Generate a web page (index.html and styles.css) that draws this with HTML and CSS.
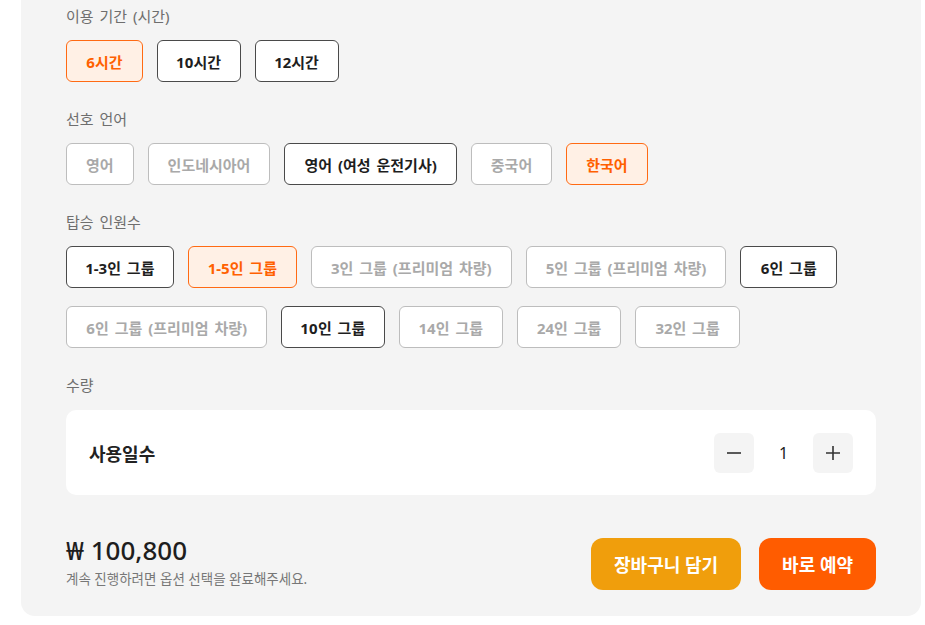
FILE: index.html
```html
<!DOCTYPE html>
<html lang="ko">
<head>
<meta charset="utf-8">
<link rel="stylesheet" href="styles.css">
</head>
<body>
<div class="panel">
  <section class="group">
    <div class="label">이용 기간 (시간)</div>
    <div class="options">
      <button class="opt selected">6시간</button>
      <button class="opt">10시간</button>
      <button class="opt">12시간</button>
    </div>
  </section>
  <section class="group">
    <div class="label">선호 언어</div>
    <div class="options">
      <button class="opt disabled">영어</button>
      <button class="opt disabled">인도네시아어</button>
      <button class="opt">영어 (여성 운전기사)</button>
      <button class="opt disabled">중국어</button>
      <button class="opt selected">한국어</button>
    </div>
  </section>
  <section class="group">
    <div class="label">탑승 인원수</div>
    <div class="options">
      <button class="opt">1-3인 그룹</button>
      <button class="opt selected">1-5인 그룹</button>
      <button class="opt disabled">3인 그룹 (프리미엄 차량)</button>
      <button class="opt disabled">5인 그룹 (프리미엄 차량)</button>
      <button class="opt">6인 그룹</button>
      <button class="opt disabled">6인 그룹 (프리미엄 차량)</button>
      <button class="opt">10인 그룹</button>
      <button class="opt disabled">14인 그룹</button>
      <button class="opt disabled">24인 그룹</button>
      <button class="opt disabled">32인 그룹</button>
    </div>
  </section>
  <section class="group qty-group">
    <div class="label">수량</div>
    <div class="qty-card">
      <div class="qty-name">사용일수</div>
      <div class="stepper">
        <button class="step" aria-label="minus">
          <svg width="16" height="16" viewBox="0 0 16 16"><path d="M1 8H15" stroke="#333" stroke-width="1.6" fill="none"/></svg>
        </button>
        <span class="count">1</span>
        <button class="step" aria-label="plus">
          <svg width="16" height="16" viewBox="0 0 16 16"><path d="M1 8H15M8 1V15" stroke="#333" stroke-width="1.6" fill="none"/></svg>
        </button>
      </div>
    </div>
  </section>
  <div class="footer">
    <div class="price-block">
      <div class="price">₩ 100,800</div>
      <div class="hint">계속 진행하려면 옵션 선택을 완료해주세요.</div>
    </div>
    <div class="actions">
      <button class="cta cart">장바구니 담기</button>
      <button class="cta book">바로 예약</button>
    </div>
  </div>
</div>
</body>
</html>
```
FILE: styles.css
```css
* { box-sizing: border-box; }
html, body { margin: 0; padding: 0; background: #ffffff; }
body {
  font-family: "Noto Sans", "Noto Sans CJK KR", sans-serif;
  color: #222;
}
.panel {
  margin-left: 21px;
  width: 900px;
  background: #f4f4f4;
  border-radius: 0 0 14px 14px;
  padding: 6px 45px 23px;
  display: flex;
  flex-direction: column;
  gap: 27px;
}
.group { display: flex; flex-direction: column; gap: 14px; }
.qty-group { gap: 15px; }
.label {
  font-size: 15px;
  line-height: 20px;
  color: #6e6e6e;
  word-spacing: 2px;
}
.options {
  display: flex;
  flex-wrap: wrap;
  column-gap: 14px;
  row-gap: 18px;
}
.opt {
  font-family: inherit;
  height: 42px;
  padding: 0 19px;
  border: 1px solid #4a4a4a;
  border-radius: 6px;
  background: #fff;
  color: #1e1e1e;
  font-size: 15px;
  font-weight: 700;
  word-spacing: 2px;
  font-variant-numeric: proportional-nums;
  cursor: pointer;
}
.opt.selected {
  border-color: #ff6a13;
  background: #fff0e5;
  color: #ff6000;
}
.opt.disabled {
  border-color: #bdbdbd;
  color: #a9a9a9;
}
.qty-card {
  background: #fff;
  border-radius: 10px;
  height: 85px;
  padding: 0 23px;
  display: flex;
  align-items: center;
  justify-content: space-between;
}
.qty-name { font-size: 18px; font-weight: 700; color: #222; }
.stepper { display: flex; align-items: center; }
.step {
  width: 40px;
  height: 40px;
  border: none;
  border-radius: 6px;
  background: #f4f4f4;
  display: flex;
  align-items: center;
  justify-content: center;
  padding: 0;
}
.count {
  width: 59px;
  text-align: center;
  font-size: 16px;
  color: #222;
}
.footer {
  margin-top: 13px;
  display: flex;
  align-items: center;
  justify-content: space-between;
}
.price-block { padding-bottom: 5px; }
.price {
  font-size: 26px;
  line-height: 30px;
  font-weight: 500;
  color: #1e1e1e;
}
.hint {
  margin-top: 5px;
  font-size: 13.5px;
  line-height: 18px;
  color: #777;
}
.actions { display: flex; gap: 18px; }
.cta {
  font-family: inherit;
  height: 52px;
  border: none;
  border-radius: 12px;
  color: #fff;
  font-size: 18px;
  font-weight: 700;
  padding: 0 23px;
}
.cart { background: #f09e0c; }
.book { background: #ff5c00; }
```
